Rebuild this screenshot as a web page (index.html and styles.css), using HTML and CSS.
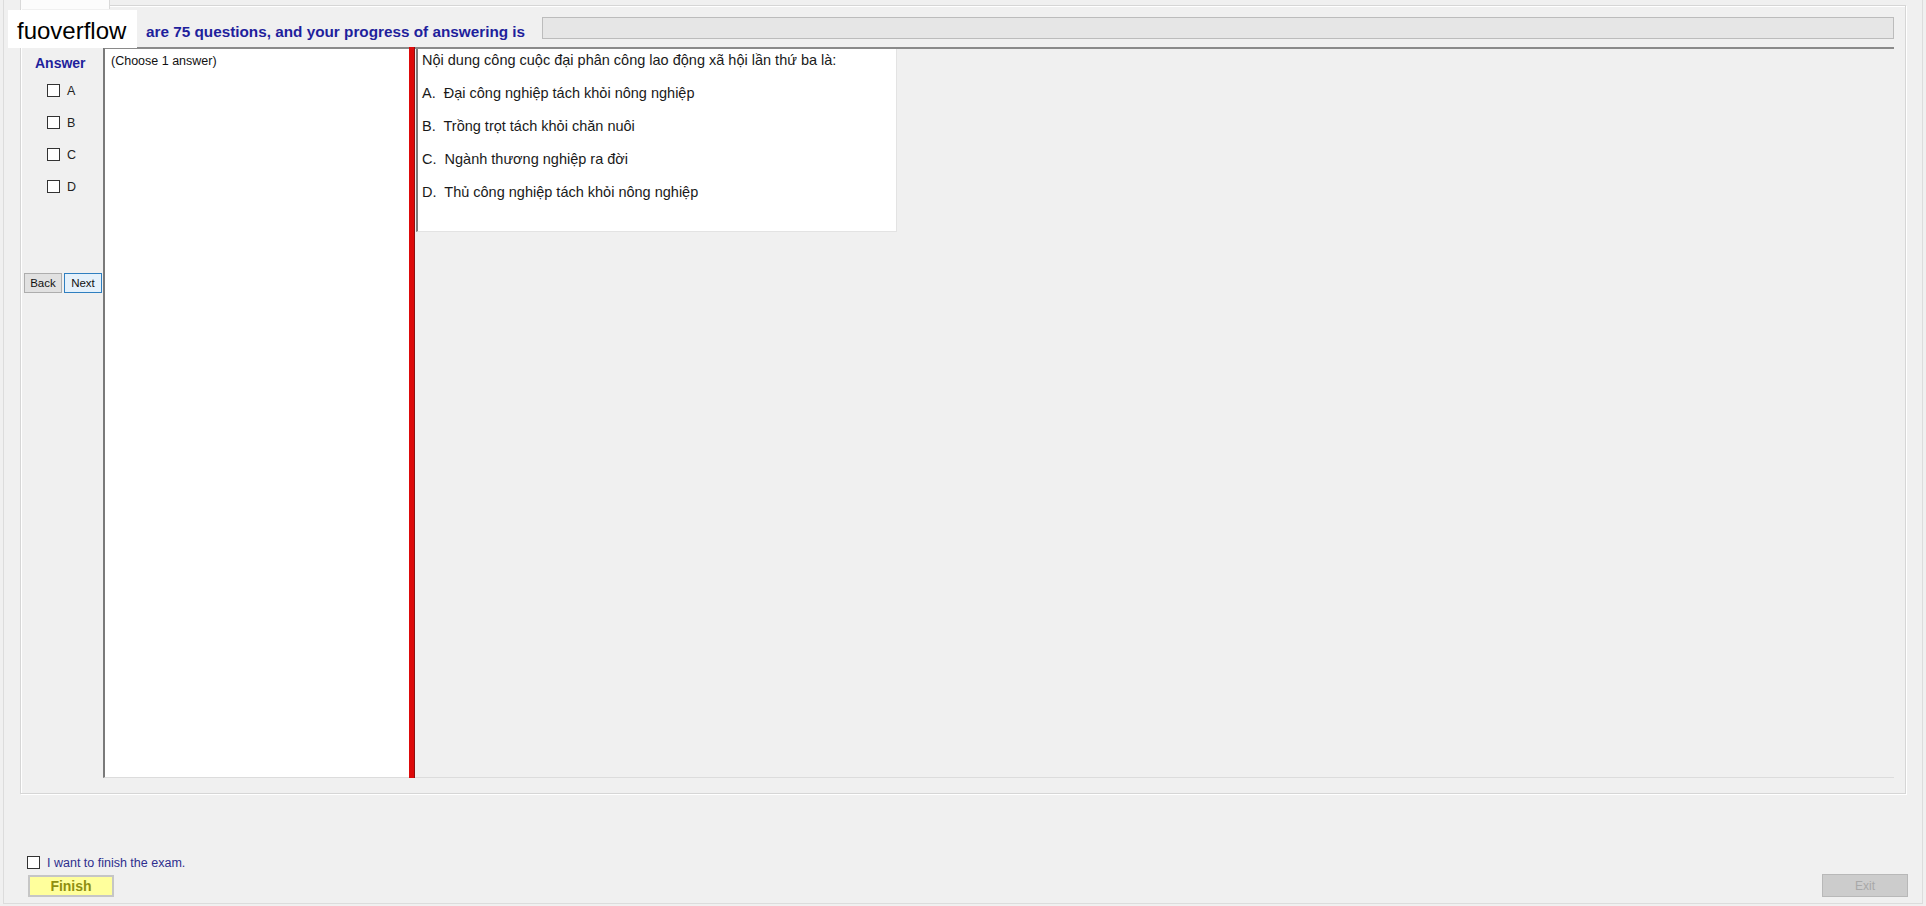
FILE: index.html
```html
<!DOCTYPE html>
<html lang="en">
  <head>
    <meta charset="UTF-8" />
    <meta name="viewport" content="width=device-width, initial-scale=1.0" />
    <title>Exam</title>
    <link rel="stylesheet" href="styles.css">
  </head>
  <body>
    <div class="brand">fuoverflow</div>

    <div class="window">
      <div class="tabs">
        <div class="tab"></div>
      </div>

      <div class="group">
        <div class="header">
          <div class="progressText">are 75 questions, and your progress of answering is</div>
          <div class="progressBar"></div>
        </div>

        <div class="content">
          <div class="answers">
            <div class="answerTitle">Answer</div>
            <div class="answerList">
              <div class="answerRow"><span class="box"></span>A</div>
              <div class="answerRow"><span class="box"></span>B</div>
              <div class="answerRow"><span class="box"></span>C</div>
              <div class="answerRow"><span class="box"></span>D</div>
            </div>
            <div class="navButtons">
              <button class="navBtn">Back</button>
              <button class="navBtn navNext">Next</button>
            </div>
          </div>

          <div class="choosePanel">(Choose 1 answer)</div>

          <div class="splitter"></div>

          <div class="questionArea">
            <div class="questionBox">
              <p>Nội dung công cuộc đại phân công lao động xã hội lần thứ ba là:</p>
              <p class="option">A.  Đại công nghiệp tách khỏi nông nghiệp</p>
              <p class="option">B.  Trồng trọt tách khỏi chăn nuôi</p>
              <p class="option">C.  Ngành thương nghiệp ra đời</p>
              <p class="option">D.  Thủ công nghiệp tách khỏi nông nghiệp</p>
            </div>
          </div>
        </div>
      </div>

      <div class="footer">
        <div class="finishBlock">
          <div class="finishCheck"><span class="box"></span>I want to finish the exam.</div>
          <button class="finishBtn">Finish</button>
        </div>
        <button class="exitBtn">Exit</button>
      </div>
    </div>
  </body>
</html>
```

FILE: styles.css
```css
body {
  font-family: "Liberation Sans", Arial, sans-serif;
  background-color: #f0f0f0;
  color: #111;
  margin: 0;
  width: 1926px;
  height: 906px;
  overflow: hidden;
  position: relative;
}

/* watermark box over the header */
.brand {
  position: absolute;
  left: 8px;
  top: 10px;
  width: 129px;
  height: 38px;
  padding: 6px 0 0 9px;
  box-sizing: border-box;
  background-color: #fff;
  font-size: 24px;
  line-height: 30px;
  color: #000;
  z-index: 5;
}

.window {
  margin-left: 3px;
  width: 1920px;
  height: 904px;
  box-sizing: border-box;
  border: 1px solid #dcdcdc;
  border-top: none;
}

.tabs {
  height: 5px;
  padding-left: 16px;
}

.tab {
  position: relative;
  z-index: 1;
  width: 90px;
  height: 9px;
  box-sizing: border-box;
  background-color: #fcfcfc;
  border: 1px solid #d9d9d9;
  border-top: none;
  border-bottom: none;
}

.group {
  margin-left: 16px;
  width: 1886px;
  height: 789px;
  box-sizing: border-box;
  border: 1px solid #d6d6d6;
  box-shadow: inset 1px 1px 0 #fff, 1px 1px 0 #fff;
}

.header {
  display: flex;
  height: 41px;
  padding-left: 125px;
  padding-right: 11px;
}

.progressText {
  width: 396px;
  margin-top: 15px;
  font-size: 15.3px;
  font-weight: bold;
  line-height: 22px;
  color: #1f1f9c;
  white-space: nowrap;
}

.progressBar {
  flex: 1;
  height: 22px;
  margin-top: 11px;
  box-sizing: border-box;
  background-color: #e6e6e6;
  border: 1px solid #bcbcbc;
}

.content {
  display: flex;
  height: 731px;
  margin-right: 11px;
}

.answers {
  width: 82px;
  padding-top: 8px;
  box-sizing: border-box;
}

.answerTitle {
  padding-left: 14px;
  font-size: 14px;
  font-weight: bold;
  line-height: 16px;
  color: #1f1f9c;
}

.answerList {
  display: flex;
  flex-direction: column;
  gap: 19px;
  margin-top: 13px;
  padding-left: 26px;
}

.answerRow {
  display: flex;
  align-items: center;
  gap: 7px;
  height: 13px;
  font-size: 12.5px;
  color: #222;
}

.box {
  display: inline-block;
  width: 13px;
  height: 13px;
  box-sizing: border-box;
  background-color: #fff;
  border: 1px solid #333;
}

.navButtons {
  display: flex;
  gap: 2px;
  margin-top: 80px;
  padding-left: 3px;
}

.navBtn {
  width: 38px;
  height: 20px;
  padding: 0;
  font-family: inherit;
  font-size: 11.5px;
  color: #111;
  background-color: #e1e1e1;
  border: 1px solid #adadad;
}

.navNext {
  background-color: #e5f1fb;
  border-color: #2f7fc0;
}

.choosePanel {
  width: 306px;
  box-sizing: border-box;
  padding: 5px 0 0 6px;
  background-color: #fff;
  border-left: 2px solid #7a7a7a;
  border-top: 2px solid #8a8a8a;
  border-bottom: 1px solid #dcdcdc;
  font-size: 12.5px;
  line-height: 15px;
  color: #111;
}

.splitter {
  width: 6px;
  background-color: #dd0a0a;
  border-right: 1px solid #8e1010;
  box-sizing: border-box;
}

.questionArea {
  flex: 1;
  border-top: 2px solid #8a8a8a;
  border-bottom: 1px solid #dcdcdc;
}

.questionBox {
  display: flex;
  flex-direction: column;
  gap: 15px;
  width: 481px;
  height: 183px;
  margin-left: 1px;
  padding: 2px 0 0 4px;
  box-sizing: border-box;
  background-color: #fff;
  border-left: 2px solid #7d7d7d;
  border-right: 1px solid #e3e3e3;
  border-bottom: 1px solid #e3e3e3;
}

.questionBox p {
  margin: 0;
  font-size: 14.5px;
  line-height: 18px;
  color: #1a1a1a;
  white-space: pre;
}

.footer {
  display: flex;
  justify-content: space-between;
  align-items: flex-end;
  height: 109px;
  box-sizing: border-box;
  padding: 0 14px 6px 23px;
}

.finishCheck {
  display: flex;
  align-items: center;
  gap: 7px;
  height: 13px;
  margin-bottom: 6px;
  font-size: 12.5px;
  color: #2e2e8e;
}

.finishBtn {
  width: 86px;
  height: 22px;
  margin-left: 1px;
  padding: 0;
  font-family: inherit;
  font-size: 14px;
  font-weight: bold;
  color: #8f8f10;
  background-color: #ffff9c;
  border: 2px solid #c6c6c6;
}

.exitBtn {
  width: 86px;
  height: 23px;
  padding: 0;
  font-family: inherit;
  font-size: 12px;
  color: #a8a8a8;
  background-color: #cccccc;
  border: 1px solid #b8b8b8;
}
```
